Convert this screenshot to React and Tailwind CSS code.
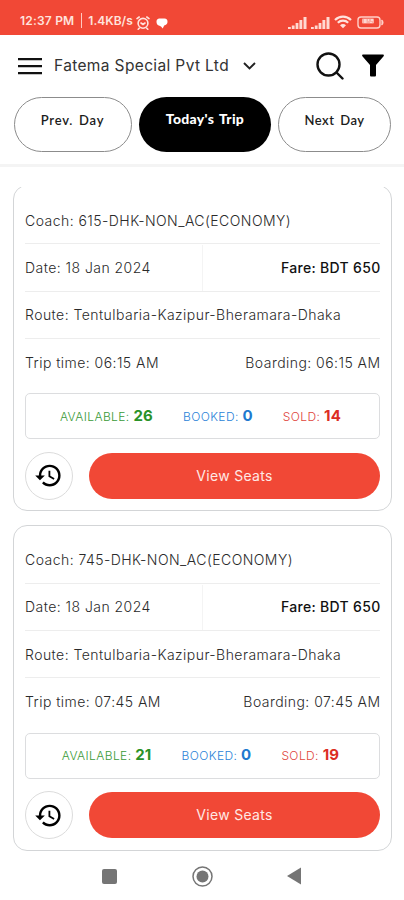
import { MdHistory } from 'react-icons/md';

const trips = [
  { coach: '615-DHK-NON_AC(ECONOMY)', date: '18 Jan 2024', fare: 650, route: 'Tentulbaria-Kazipur-Bheramara-Dhaka', time: '06:15 AM', available: 26, booked: 0, sold: 14 },
  { coach: '745-DHK-NON_AC(ECONOMY)', date: '18 Jan 2024', fare: 650, route: 'Tentulbaria-Kazipur-Bheramara-Dhaka', time: '07:45 AM', available: 21, booked: 0, sold: 19 },
];

function Signal() {
  return (
    <svg width="19" height="12" viewBox="0 0 19 12" fill="#ffd9d2">
      <path d="M0 10h2.8v2H0zM3.8 8.5h2.8V12H3.8zM7.6 6h2.8v6H7.6zM11.4 3h2.9v9h-2.9zM15.5 0h3v12h-3z" />
    </svg>
  );
}

function StatusBar() {
  return (
    <div className="flex h-[35px] shrink-0 items-start justify-between bg-[#f14836] pl-5 pr-[20px] text-[#ffe3dd]">
      <div className="flex items-center pt-[11px]">
        <span className="whitespace-nowrap text-[12px] font-semibold leading-[18px] tracking-[0.2px]">12:37 PM</span>
        <span className="ml-[7px] mr-[6px] h-[15px] w-px bg-[#ffc9c0]" />
        <span className="whitespace-nowrap text-[12px] font-semibold leading-[18px]">1.4KB/s</span>
        <svg className="ml-[3px] mt-[5px]" width="14" height="14" viewBox="0 0 14 14" fill="none" stroke="currentColor" strokeWidth="1.6" strokeLinecap="round">
          <circle cx="7" cy="7.3" r="4.9" />
          <path d="M1 2.6 3.2 1M13 2.6 10.8 1M3.2 12.2l-1 1M10.8 12.2l1 1M5 7l2 1.5L9 7" />
        </svg>
        <svg className="ml-[6px] mt-[5px]" width="12" height="11" viewBox="0 0 12 11" fill="#fff">
          <path d="M3 .5h5.5A3.3 3.3 0 0 1 11.5 4c0 2-1.4 3-3.3 3.6L6.7 10.5 5 8.5 3.5 7.7C1.5 7.3.5 6 .5 4A3.3 3.3 0 0 1 3 .5z" />
        </svg>
      </div>
      <div className="flex items-end pt-[15px]">
        <Signal />
        <span className="w-[4px]" />
        <Signal />
        <svg className="ml-[4px]" width="18" height="14" viewBox="0 0 18 14" fill="none" stroke="#ffe3dd" strokeWidth="2.2">
          <path d="M1 5c4.6-4.5 11.4-4.5 16 0M3.8 7.8c3-2.9 7.4-2.9 10.4 0" />
          <path d="M6 10.2c1.8-1.6 4.2-1.6 6 0l-3 3z" fill="#ffe3dd" stroke="none" />
        </svg>
        <svg className="ml-[5px]" width="27" height="13" viewBox="0 0 27 13" fill="none" stroke="#ffd0c8" strokeWidth="1.4">
          <rect x="1" y="1" width="22" height="11" rx="3" />
          <path d="M24.5 4c1.8 1 1.8 4 0 5" fill="#ffe3dd" />
          <rect x="5" y="2.5" width="12" height="5" rx="1" fill="#fbb0a6" stroke="none" />
          <path d="M7 4h2.5M11 4h1M14 4h2M7 6h2.5M14 6v1" stroke="#fff" strokeWidth="1" />
        </svg>
      </div>
    </div>
  );
}

function Header() {
  return (
    <div className="flex h-[62px] shrink-0 items-center pl-[18px] pr-[20px]">
      <svg className="-mt-px shrink-0" width="24" height="18" viewBox="0 0 24 18" fill="#111">
        <path d="M0 1h24v2.3H0zM0 8h24v2.3H0zM0 15h24v2.3H0z" />
      </svg>
      <span className="ml-[12px] w-[176px] whitespace-nowrap text-[15.5px] leading-6 tracking-[0.36px] text-[#333]">Fatema Special Pvt Ltd</span>
      <svg className="-mt-px ml-[13px] shrink-0" width="13" height="8" viewBox="0 0 13 8" fill="none" stroke="#222" strokeWidth="1.9">
        <path d="m1 1 5.5 5.5L12 1" />
      </svg>
      <svg className="ml-auto" width="28" height="28" viewBox="0 0 28 28" fill="none" stroke="#111" strokeWidth="2.4" strokeLinecap="round">
        <circle cx="12.5" cy="12.5" r="11" />
        <path d="m20.5 20.5 6 6" />
      </svg>
      <svg className="-mt-px ml-[18px]" width="22" height="23" viewBox="0 0 22 23" fill="#000">
        <path d="M1.2.5h19.6c1 0 1.4 1 .8 1.7L14 11v10.2c0 .8-.5 1.3-1.3 1.3H9.3c-.8 0-1.3-.5-1.3-1.3V11L.4 2.2C-.2 1.5.2.5 1.2.5z" />
      </svg>
    </div>
  );
}

function DayTabs() {
  return (
    <div className="flex h-[67px] shrink-0 gap-[7px] pl-[14px] pr-[12px] font-['Lato',sans-serif] text-[13px] font-semibold leading-[18px] text-[#1c1c1c]">
      <button className="flex h-[55px] w-[118px] justify-center whitespace-nowrap rounded-full border border-[#8c8c8c] pr-px pt-[13px] tracking-[0.75px] [word-spacing:2px]">Prev. Day</button>
      <button className="flex h-[55px] w-[132px] justify-center whitespace-nowrap rounded-full bg-black pt-[13px] text-[14px] font-black tracking-[0.3px] text-white [word-spacing:1.5px]">Today's Trip</button>
      <button className="flex h-[55px] w-[113px] justify-center whitespace-nowrap rounded-full border border-[#8c8c8c] pt-[13px] tracking-[0.5px] [word-spacing:2px]">Next Day</button>
    </div>
  );
}

function TripCard({ trip }) {
  return (
    <div className="h-[326px] shrink-0 rounded-[14px] border border-[#d3d5d7] px-[11px] pt-[11px] text-[14px] font-light leading-5 tracking-[0.45px] text-[#2a2a2a]">
      <div className="flex h-[47.3px] items-center border-b border-[#ededed] pt-px">
        <span className="whitespace-nowrap">Coach: {trip.coach}</span>
      </div>
      <div className="flex h-[47.3px] items-center border-b border-[#ededed] pt-px">
        <div className="flex h-full w-[178px] items-center border-r border-[#f4f4f4]">
          <span className="whitespace-nowrap">Date: {trip.date}</span>
        </div>
        <span className="-mr-[0.5px] ml-auto whitespace-nowrap font-medium tracking-[0.3px] text-[#111]">Fare: BDT {trip.fare}</span>
      </div>
      <div className="flex h-[47.3px] items-center border-b border-[#ededed] pt-px">
        <span className="whitespace-nowrap">Route: {trip.route}</span>
      </div>
      <div className="flex h-[47.3px] items-center justify-between">
        <span className="whitespace-nowrap">Trip time: {trip.time}</span>
        <span className="-mr-[0.5px] whitespace-nowrap">Boarding: {trip.time}</span>
      </div>
      <div className="mt-[7px] flex h-[46px] items-center justify-center gap-[30px] rounded-[5px] border-[1.5px] border-[#dcdddf] pr-[4px] text-[12px] tracking-[0.4px]">
        <span className="whitespace-nowrap text-[#3a9a38]">AVAILABLE: <b className="text-[15px] font-bold tracking-[0.2px] text-[#2a9228]">{trip.available}</b></span>
        <span className="whitespace-nowrap text-[#2b83d8]">BOOKED: <b className="text-[15px] font-bold tracking-[0.2px] text-[#2079cf]">{trip.booked}</b></span>
        <span className="whitespace-nowrap text-[#e0453c]">SOLD: <b className="text-[15px] font-bold tracking-[0.2px] text-[#dc2d24]">{trip.sold}</b></span>
      </div>
      <div className="mt-[12.5px] flex items-center gap-[16px]">
        <button className="flex size-[48px] shrink-0 items-center justify-center rounded-full border border-[#dcdcdc]">
          <MdHistory size={29} color="#000" className="-ml-px" />
        </button>
        <button className="h-[46px] flex-1 rounded-full bg-[#f14836] text-[14px] font-normal tracking-[0.3px] text-[#ffe9e5]">View Seats</button>
      </div>
    </div>
  );
}

function NavBar() {
  return (
    <div className="flex h-[49px] shrink-0 items-center pl-[102px] pt-px">
      <div className="size-[15px] rounded-[2px] bg-[#757575]" />
      <svg className="ml-[75px]" width="21" height="21" viewBox="0 0 21 21">
        <circle cx="10.5" cy="10.5" r="9.5" fill="none" stroke="#757575" strokeWidth="1.5" />
        <circle cx="10.5" cy="10.5" r="6" fill="#757575" />
      </svg>
      <svg className="ml-[74px]" width="14" height="18" viewBox="0 0 14 18" fill="#757575">
        <path d="M14 .5v17L0 9z" />
      </svg>
    </div>
  );
}

export default function App() {
  return (
    <div className="flex h-[900px] w-[404px] flex-col overflow-hidden bg-white font-['Inter',sans-serif]">
      <StatusBar />
      <Header />
      <DayTabs />
      <div className="h-[3px] shrink-0 bg-[#f4f4f4]" />
      <div className="mt-[20px] flex h-[664px] shrink-0 flex-col overflow-hidden pl-[13px] pr-[12px]">
        <div className="-mt-[2px] flex flex-col gap-[13.5px]">
          {trips.map(trip => <TripCard key={trip.coach} trip={trip} />)}
        </div>
      </div>
      <NavBar />
    </div>
  );
}
